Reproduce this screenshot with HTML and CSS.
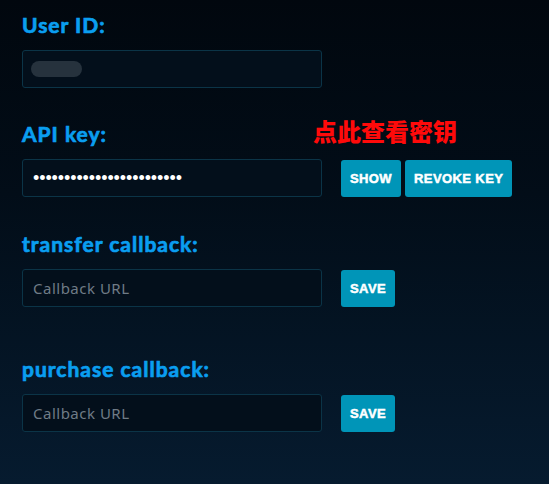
FILE: index.html
```html
<!DOCTYPE html>
<html>
<head>
<meta charset="utf-8">
<link rel="stylesheet" href="styles.css">
</head>
<body>
<div class="page">
  <section class="field field-id">
    <div class="label-row"><h2 class="label">User ID:</h2></div>
    <div class="row">
      <div class="box"><span class="masked"></span></div>
    </div>
  </section>
  <section class="field field-key">
    <div class="label-row"><h2 class="label">API key:</h2><span class="hint">点此查看密钥</span></div>
    <div class="row">
      <div class="box"><span class="dots">••••••••••••••••••••••••</span></div>
      <div class="btns">
        <button class="btn">SHOW</button>
        <button class="btn">REVOKE KEY</button>
      </div>
    </div>
  </section>
  <section class="field field-transfer">
    <div class="label-row"><h2 class="label">transfer callback:</h2></div>
    <div class="row">
      <input class="box input" type="text" placeholder="Callback URL">
      <div class="btns"><button class="btn">SAVE</button></div>
    </div>
  </section>
  <section class="field field-purchase">
    <div class="label-row"><h2 class="label">purchase callback:</h2></div>
    <div class="row">
      <input class="box input" type="text" placeholder="Callback URL">
      <div class="btns"><button class="btn">SAVE</button></div>
    </div>
  </section>
</div>
</body>
</html>
```
FILE: styles.css
```css
html, body {
  margin: 0;
  padding: 0;
  height: 100%;
}
body {
  background: linear-gradient(180deg, #01070e 0%, #020d18 40%, #061b2f 100%);
  font-family: "Lato", "Noto Sans", sans-serif;
}
.page {
  padding: 10px 22px 0 22px;
}
.field-id { margin-bottom: 31px; }
.field-key { margin-bottom: 32px; }
.field-transfer { margin-bottom: 47px; }
.label-row {
  display: flex;
  align-items: center;
  height: 30px;
  margin-bottom: 10px;
}
.label {
  margin: -2px 0 0 0;
  font-family: "Lato", sans-serif;
  font-weight: 700;
  font-size: 21px;
  letter-spacing: 1px;
  -webkit-text-stroke: 0.7px #0a9ef0;
  color: #0a9ef0;
  width: 291px;
}
.hint {
  font-family: "Noto Sans CJK SC", sans-serif;
  font-weight: 900;
  font-size: 24px;
  color: #ff0a0a;
  margin-top: -8px;
}
.row {
  display: flex;
  align-items: flex-start;
}
.box {
  box-sizing: border-box;
  width: 300px;
  height: 38px;
  background: #030f1b;
  border: 1px solid #0b3447;
  border-radius: 3px;
  display: flex;
  align-items: center;
  padding: 0 10px;
}
.input {
  font-family: "Noto Sans", sans-serif;
  font-size: 15px;
  letter-spacing: 0.5px;
  color: #c8d0d8;
  outline: none;
}
.input::placeholder {
  color: #6f7b86;
}
.masked {
  display: block;
  width: 51px;
  height: 16px;
  border-radius: 8px;
  background: #26323d;
  margin-left: -2px;
}
.dots {
  color: #ffffff;
  font-family: "Liberation Sans", sans-serif;
  font-size: 18px;
  letter-spacing: -0.1px;
  margin-top: 1px;
}
.btns {
  display: flex;
  gap: 4px;
  margin-left: 19px;
  margin-top: 1px;
}
.btn {
  height: 37px;
  padding: 0 9px;
  background: #0095b8;
  border: none;
  border-radius: 3px;
  color: #ffffff;
  font-family: "Liberation Sans", Arial, sans-serif;
  font-weight: 700;
  font-size: 13px;
  -webkit-text-stroke: 0.5px #ffffff;
  letter-spacing: 0.4px;
}
```
